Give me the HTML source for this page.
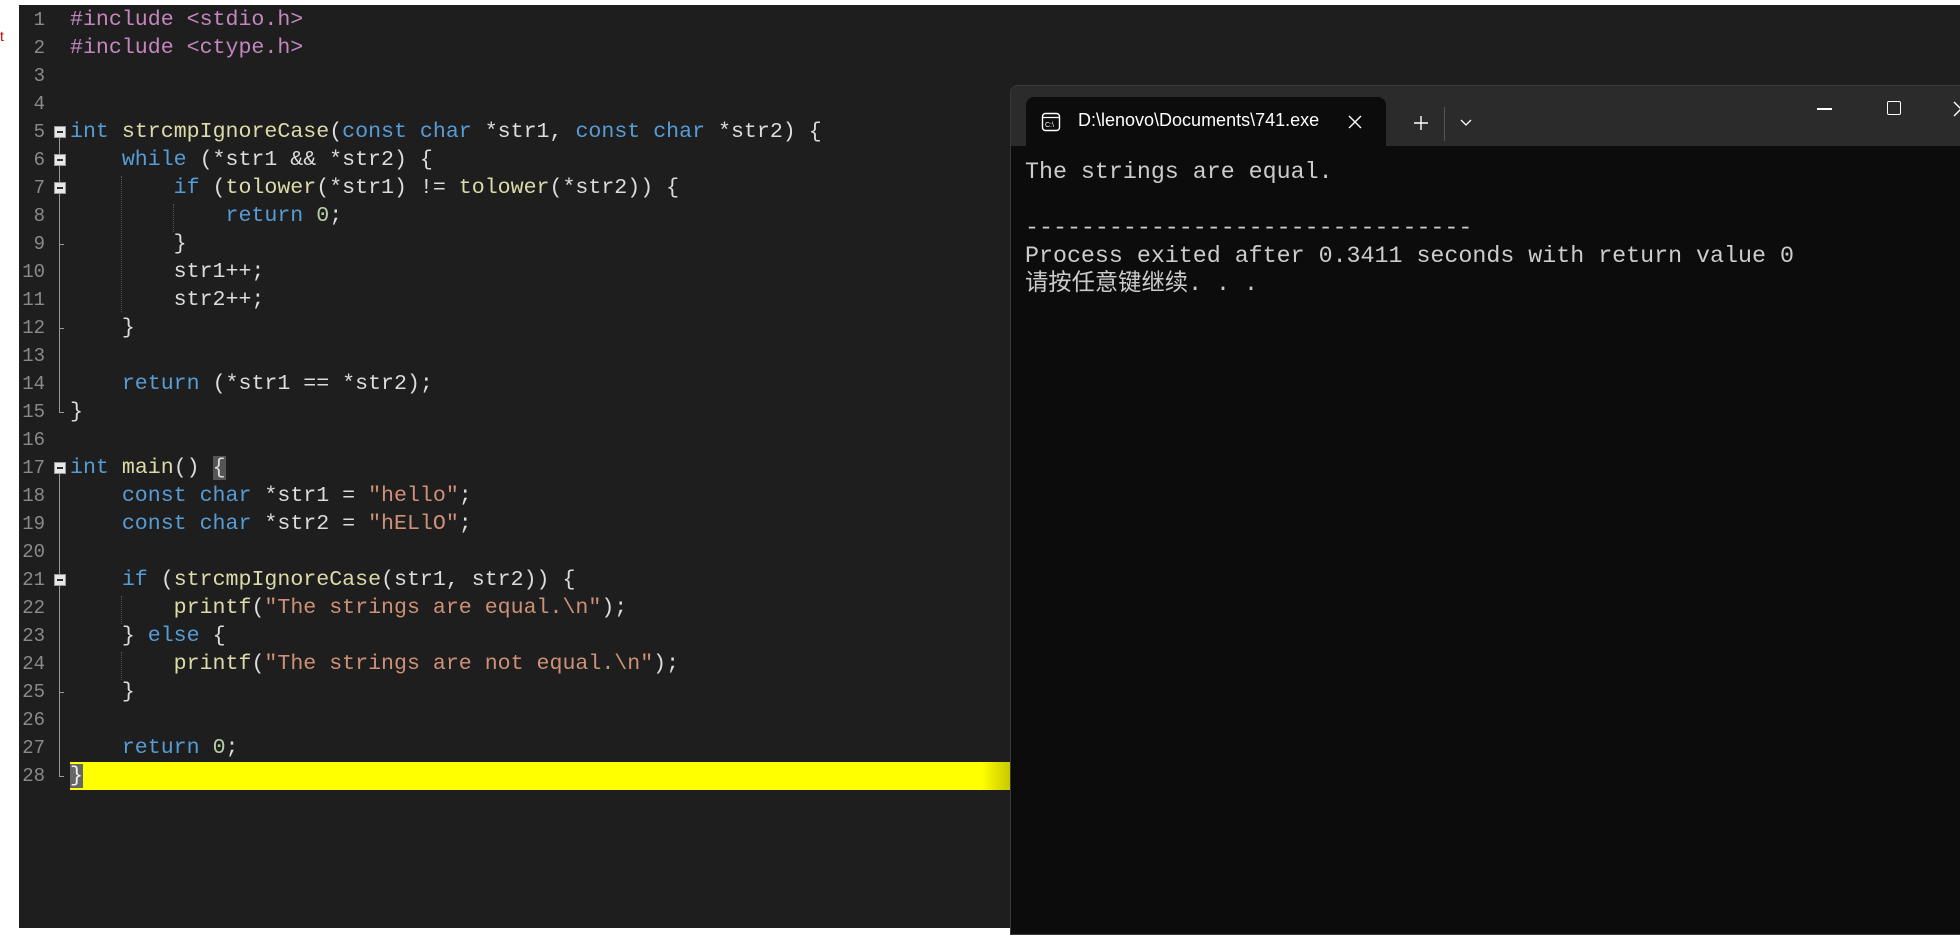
<!DOCTYPE html>
<html><head><meta charset="utf-8"><style>
*{margin:0;padding:0;box-sizing:border-box}
body{width:1960px;height:928px;background:#fff;position:relative;overflow:hidden;font-family:"Liberation Mono",monospace}
#ed{position:absolute;left:19px;top:5px;width:1941px;height:923px;background:#1e1e1e}
#wrap{position:absolute;left:0;top:1px;width:1010px;height:927px}
.ln{position:absolute;left:19px;width:26px;text-align:right;color:#8a8a8a;font-size:19px;height:28px;line-height:28px}
.cl{position:absolute;left:70px;white-space:pre;color:#dcdcdc;font-size:21.6px;height:28px;line-height:28px}
.k{color:#569cd6}.p{color:#c586c0}.s{color:#ce9178}.n{color:#b5cea8}.f{color:#dcdcaa}
.fb{position:absolute;left:54px;width:12px;height:12px;background:#e8e8e8;border:1px solid #999}
.fb:after{content:"";position:absolute;left:2px;top:4px;width:6px;height:1.5px;background:#333}
.vl{position:absolute;left:59px;width:1px;background:#999}
.tk{position:absolute;left:59px;width:5px;height:1px;background:#999}
.ig{position:absolute;width:0;border-left:1px dotted #555}
#term{position:absolute;left:1010px;top:85px;width:960px;height:850px;background:#0c0c0c;border:1px solid #3a3a3a;border-radius:8px 0 0 0;overflow:hidden}
#bar{position:absolute;left:0;top:0;width:100%;height:60px;background:#2b2b2b}
#tab{position:absolute;left:15px;top:11px;width:360px;height:50px;background:#0c0c0c;border-radius:8px 8px 0 0}
.tt{position:absolute;font-family:"Liberation Sans",sans-serif;color:#fff}
.to{position:absolute;left:14px;white-space:pre;color:#cccccc;font-size:23.3px;line-height:28px;font-family:"Liberation Mono","Noto Sans CJK SC",monospace}
</style></head><body>
<div style="position:absolute;left:0;top:28px;color:#c00;font-size:14px;font-family:'Liberation Sans'">t</div>
<div id="ed"></div>
<div id="wrap">
<div class="ln" style="top:5px">1</div><div class="ln" style="top:33px">2</div><div class="ln" style="top:61px">3</div><div class="ln" style="top:89px">4</div><div class="ln" style="top:117px">5</div><div class="ln" style="top:145px">6</div><div class="ln" style="top:173px">7</div><div class="ln" style="top:201px">8</div><div class="ln" style="top:229px">9</div><div class="ln" style="top:257px">10</div><div class="ln" style="top:285px">11</div><div class="ln" style="top:313px">12</div><div class="ln" style="top:341px">13</div><div class="ln" style="top:369px">14</div><div class="ln" style="top:397px">15</div><div class="ln" style="top:425px">16</div><div class="ln" style="top:453px">17</div><div class="ln" style="top:481px">18</div><div class="ln" style="top:509px">19</div><div class="ln" style="top:537px">20</div><div class="ln" style="top:565px">21</div><div class="ln" style="top:593px">22</div><div class="ln" style="top:621px">23</div><div class="ln" style="top:649px">24</div><div class="ln" style="top:677px">25</div><div class="ln" style="top:705px">26</div><div class="ln" style="top:733px">27</div><div class="ln" style="top:761px">28</div>
<div class="vl" style="top:131px;height:280px"></div>
<div class="vl" style="top:467px;height:308px"></div>
<div class="tk" style="top:243px"></div><div class="tk" style="top:327px"></div><div class="tk" style="top:411px"></div><div class="tk" style="top:691px"></div><div class="tk" style="top:775px"></div>
<div class="fb" style="top:125px"></div><div class="fb" style="top:153px"></div><div class="fb" style="top:181px"></div><div class="fb" style="top:461px"></div><div class="fb" style="top:573px"></div>
<div class="ig" style="left:121px;top:175px;height:136px"></div>
<div class="ig" style="left:173px;top:203px;height:28px"></div>
<div class="ig" style="left:121px;top:595px;height:28px"></div>
<div class="ig" style="left:121px;top:651px;height:28px"></div>
<div style="position:absolute;left:70px;top:761px;width:940px;height:28px;background:linear-gradient(90deg,#ffff00 0,#ffff00 97%,#c8c800 100%)"></div>
<div class="cl" style="top:5px"><span class="p">#include &lt;stdio.h&gt;</span></div>
<div class="cl" style="top:33px"><span class="p">#include &lt;ctype.h&gt;</span></div>
<div class="cl" style="top:117px"><span class="k">int</span> <span class="f">strcmpIgnoreCase</span>(<span class="k">const char</span> *str1, <span class="k">const char</span> *str2) {</div>
<div class="cl" style="top:145px">    <span class="k">while</span> (*str1 &amp;&amp; *str2) {</div>
<div class="cl" style="top:173px">        <span class="k">if</span> (<span class="f">tolower</span>(*str1) != <span class="f">tolower</span>(*str2)) {</div>
<div class="cl" style="top:201px">            <span class="k">return</span> <span class="n">0</span>;</div>
<div class="cl" style="top:229px">        }</div>
<div class="cl" style="top:257px">        str1++;</div>
<div class="cl" style="top:285px">        str2++;</div>
<div class="cl" style="top:313px">    }</div>
<div class="cl" style="top:369px">    <span class="k">return</span> (*str1 == *str2);</div>
<div class="cl" style="top:397px">}</div>
<div class="cl" style="top:453px"><span class="k">int</span> <span class="f">main</span>() <span style="background:#555">{</span></div>
<div class="cl" style="top:481px">    <span class="k">const char</span> *str1 = <span class="s">"hello"</span>;</div>
<div class="cl" style="top:509px">    <span class="k">const char</span> *str2 = <span class="s">"hELlO"</span>;</div>
<div class="cl" style="top:565px">    <span class="k">if</span> (<span class="f">strcmpIgnoreCase</span>(str1, str2)) {</div>
<div class="cl" style="top:593px">        <span class="f">printf</span>(<span class="s">"The strings are equal.\n"</span>);</div>
<div class="cl" style="top:621px">    } <span class="k">else</span> {</div>
<div class="cl" style="top:649px">        <span class="f">printf</span>(<span class="s">"The strings are not equal.\n"</span>);</div>
<div class="cl" style="top:677px">    }</div>
<div class="cl" style="top:733px">    <span class="k">return</span> <span class="n">0</span>;</div>
<div class="cl" style="top:761px"><span style="background:#666;color:#eee">}</span></div>
</div>
<div id="term">
<div id="bar"></div>
<div id="tab"></div>
<svg style="position:absolute;left:30px;top:26px" width="20" height="20" viewBox="0 0 20 20"><rect x="1.5" y="1.5" width="17" height="17" rx="3" fill="none" stroke="#fff" stroke-width="1.4"/><line x1="2" y1="5.5" x2="18" y2="5.5" stroke="#fff" stroke-width="1.2"/><text x="4" y="15" font-size="7" fill="#fff" font-family="Liberation Sans">C:\</text></svg>
<div class="tt" style="left:67px;top:24px;font-size:18px;width:246px;overflow:hidden;white-space:nowrap">D:\lenovo\Documents\741.exe</div>
<svg style="position:absolute;left:337px;top:29px" width="14" height="14"><path d="M1 1L13 13M13 1L1 13" stroke="#fff" stroke-width="1.4"/></svg>
<svg style="position:absolute;left:402px;top:29px" width="16" height="16"><path d="M8 1V15M1 8H15" stroke="#fff" stroke-width="1.4"/></svg>
<div style="position:absolute;left:433px;top:21px;width:1px;height:34px;background:#555"></div>
<svg style="position:absolute;left:449px;top:33px" width="12" height="8"><path d="M1 1L6 6L11 1" stroke="#fff" stroke-width="1.3" fill="none"/></svg>
<div style="position:absolute;left:806px;top:22px;width:15px;height:1.5px;background:#fff"></div>
<div style="position:absolute;left:876px;top:15px;width:14px;height:14px;border:1.5px solid #fff;border-radius:2px"></div>
<svg style="position:absolute;left:942px;top:15px" width="16" height="16"><path d="M1 1L15 15M15 1L1 15" stroke="#fff" stroke-width="1.4"/></svg>
<div class="to" style="top:72px">The strings are equal.</div>
<div class="to" style="top:128px">--------------------------------</div>
<div class="to" style="top:156px">Process exited after 0.3411 seconds with return value 0</div>
<div class="to" style="top:184px">请按任意键继续. . .</div>
</div>
</body></html>
